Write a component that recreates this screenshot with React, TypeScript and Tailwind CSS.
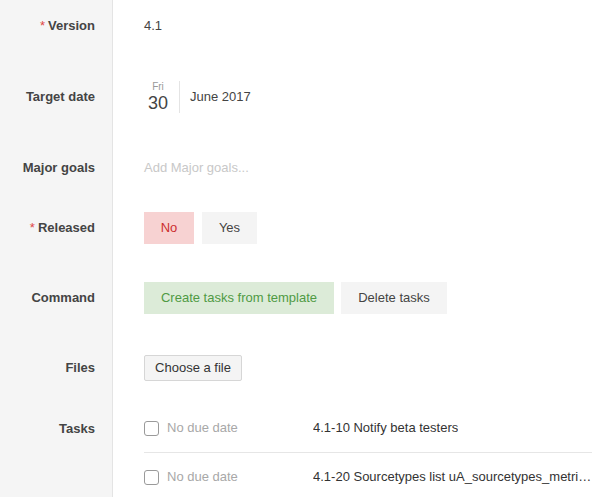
import React from "react";

function Row({
  label,
  required,
  h,
  children,
}: {
  label: string;
  required?: boolean;
  h: string;
  children: React.ReactNode;
}) {
  return (
    <div className={`flex ${h}`}>
      <div className="w-[113px] shrink-0 border-r border-[#e4e4e4] bg-[#f5f5f5] flex items-center justify-end pr-[17px]">
        <span className="font-bold text-[#444]">
          {required && <span className="text-[#e04646] font-normal mr-[3px]">*</span>}
          {label}
        </span>
      </div>
      <div className="flex-1 min-w-0 flex items-center pl-[31px]">{children}</div>
    </div>
  );
}

const tasks = [
  { title: "4.1-10 Notify beta testers" },
  { title: "4.1-20 Sourcetypes list uA_sourcetypes_metrics and more" },
];

export default function App() {
  return (
    <div
      className="w-[592px] h-[497px] overflow-hidden bg-white text-[13px] text-[#444]"
      style={{ fontFamily: '"Liberation Sans", Arial, sans-serif' }}
    >
      <Row label="Version" required h="h-[52px]">
        <span>4.1</span>
      </Row>

      <Row label="Target date" h="h-[90px]">
        <div className="flex items-center">
          <div className="flex flex-col items-center w-[28px]">
            <span className="text-[10px] leading-[12px] text-[#999]">Fri</span>
            <span className="text-[18px] leading-[20px] text-[#444]">30</span>
          </div>
          <div className="w-px h-[32px] bg-[#e4e4e4] ml-[7px] mr-[10px]" />
          <span>June 2017</span>
        </div>
      </Row>

      <Row label="Major goals" h="h-[52px]">
        <span className="text-[#c8c8c8]">Add Major goals...</span>
      </Row>

      <Row label="Released" required h="h-[68px]">
        <div className="flex gap-[8px]">
          <button className="h-[32px] w-[50px] bg-[#f7d2d2] text-[#cc2e2e]">No</button>
          <button className="h-[32px] w-[55px] bg-[#f4f4f4] text-[#444]">Yes</button>
        </div>
      </Row>

      <Row label="Command" h="h-[72px]">
        <div className="flex gap-[7px]">
          <button className="h-[32px] w-[190px] bg-[#dcebd8] text-[#4f9a44]">
            Create tasks from template
          </button>
          <button className="h-[32px] w-[106px] bg-[#f4f4f4] text-[#444]">Delete tasks</button>
        </div>
      </Row>

      <Row label="Files" h="h-[68px]">
        <button className="h-[26px] w-[98px] rounded-[2px] border border-[#d6d6d6] bg-[#f4f4f4] text-[#333]">
          Choose a file
        </button>
      </Row>

      <div className="flex h-[100px]">
        <div className="w-[113px] shrink-0 border-r border-[#e4e4e4] bg-[#f5f5f5] flex justify-end pr-[17px] pt-[17px]">
          <span className="font-bold text-[#444]">Tasks</span>
        </div>
        <div className="flex-1 min-w-0 pl-[31px]">
          {tasks.map((t, i) => (
            <div
              key={i}
              className={`flex items-center ${i === 0 ? "h-[51px] pt-[2px] border-b border-[#e6e6e6]" : "h-[48px]"}`}
            >
              <span className="w-[15px] h-[15px] shrink-0 rounded-[3px] border border-[#9a9a9a] bg-white" />
              <span className="ml-[8px] w-[146px] shrink-0 text-[#a8a8a8]">No due date</span>
              <span className="min-w-0 truncate text-[#333]">{t.title}</span>
            </div>
          ))}
        </div>
      </div>
    </div>
  );
}
